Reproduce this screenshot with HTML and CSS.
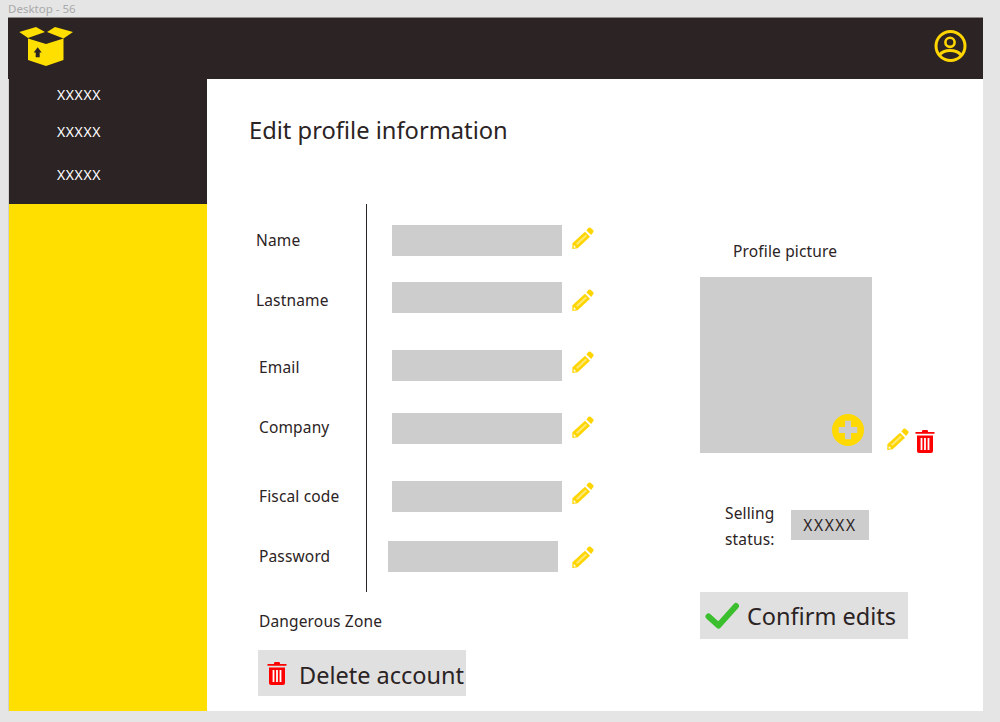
FILE: index.html
```html
<!DOCTYPE html>
<html lang="en">
<head>
<meta charset="utf-8">
<title>Edit profile information</title>
<link rel="stylesheet" href="styles.css">
</head>
<body>
<svg class="sprites" width="0" height="0" aria-hidden="true">
  <symbol id="pencil" viewBox="0 0 22 23">
    <path fill="#ffd500" d="M0.3 22 L0.4 16.3 L13 4.7 L18 9.7 L5.7 21.3 Z"/>
    <path fill="#ffe873" d="M4 16.6 L13.6 7.5 L15 8.9 L5.4 18 Z"/>
    <path fill="#fff" d="M1.6 20.8 L1.8 18 L4.2 20.2 Z"/>
    <path fill="#ffd500" d="M14.4 3.4 L16.2 1 Q17.4 -0.1 18.6 0.8 L21.3 3.2 Q22 4.4 21 5.6 L19.2 8 Z"/>
  </symbol>
  <symbol id="trash" viewBox="0 0 20 23">
    <path fill="#f00" d="M7 1.2 Q7 0 8.2 0 H11.8 Q13 0 13 1.2 V2 H19.5 V3.8 H0.5 V2 H7 Z"/>
    <path fill="#f00" d="M2 5.5 H18 V21 Q18 23 16 23 H4 Q2 23 2 21 Z"/>
    <path fill="#fff" d="M5.6 8 H7.4 V20 H5.6 Z M9.1 8 H10.9 V20 H9.1 Z M12.6 8 H14.4 V20 H12.6 Z"/>
  </symbol>
</svg>

<div class="caption">Desktop - 56</div>
<div class="frame">
  <header class="topbar">
    <svg class="logo" width="55" height="41" viewBox="0 0 55 41">
      <path fill="#ffdf00" d="M0.3 6 L17 1 L26 6 L9 12 Z M28 6 L36 1 L54 6 L44.5 12.5 Z"/>
      <path fill="#ffdf00" d="M9 12.5 L27 18 L44.5 12.5 V34 L27 40 L9 34 Z"/>
      <path fill="#2b2324" d="M16.7 31.3 V26.5 H14.7 L18.7 21.3 L22.7 26.5 H20.7 V31.3 Z"/>
    </svg>
    <svg class="avatar" width="34" height="34" viewBox="0 0 34 34">
      <circle cx="17.5" cy="17" r="14.5" fill="none" stroke="#ffd500" stroke-width="3"/>
      <circle cx="17" cy="13.3" r="4.6" fill="none" stroke="#ffd500" stroke-width="2.6"/>
      <path fill="none" stroke="#ffd500" stroke-width="3" d="M6.5 26 Q10 21.5 17 21.5 Q24.5 21.5 28 26"/>
    </svg>
  </header>
  <div class="shell">
    <aside class="sidebar">
      <nav class="menu">
        <a class="menu-item item-1">XXXXX</a>
        <a class="menu-item item-2">XXXXX</a>
        <a class="menu-item item-3">XXXXX</a>
      </nav>
    </aside>
    <main class="content">
      <h1 class="title">Edit profile information</h1>
      <div class="columns">
        <section class="left">
          <div class="form">
            <div class="row r1"><span class="label">Name</span><div class="fields"><span class="input"></span><svg class="pencil"><use href="#pencil"/></svg></div></div>
            <div class="row r2"><span class="label">Lastname</span><div class="fields"><span class="input"></span><svg class="pencil"><use href="#pencil"/></svg></div></div>
            <div class="row r3"><span class="label">Email</span><div class="fields"><span class="input"></span><svg class="pencil"><use href="#pencil"/></svg></div></div>
            <div class="row r4"><span class="label">Company</span><div class="fields"><span class="input"></span><svg class="pencil"><use href="#pencil"/></svg></div></div>
            <div class="row r5"><span class="label">Fiscal code</span><div class="fields"><span class="input"></span><svg class="pencil"><use href="#pencil"/></svg></div></div>
            <div class="row r6"><span class="label">Password</span><div class="fields"><span class="input"></span><svg class="pencil"><use href="#pencil"/></svg></div></div>
          </div>
          <p class="danger-title">Dangerous Zone</p>
          <button class="action delete"><svg class="trash-big"><use href="#trash"/></svg><span>Delete account</span></button>
        </section>
        <section class="right">
          <p class="picture-title">Profile picture</p>
          <div class="picture-row">
            <div class="picture">
              <svg class="add" width="32" height="32" viewBox="0 0 32 32">
                <circle cx="16" cy="16" r="16" fill="#ffd900"/>
                <path fill="#cdcdcd" d="M13 6.7 H19 V13 H25.3 V19 H19 V25.3 H13 V19 H6.7 V13 H13 Z"/>
              </svg>
            </div>
            <svg class="pencil-pic"><use href="#pencil"/></svg>
            <svg class="trash-pic"><use href="#trash"/></svg>
          </div>
          <div class="status">
            <span class="status-label">Selling<br>status:</span>
            <span class="chip">XXXXX</span>
          </div>
          <button class="action confirm">
            <svg class="check" width="34" height="28" viewBox="0 0 34 28"><path fill="none" stroke="#3cbf2e" stroke-width="6" stroke-linecap="round" stroke-linejoin="round" d="M3.5 14.5 L13.5 23.5 L31 4"/></svg>
            <span>Confirm edits</span>
          </button>
        </section>
      </div>
    </main>
  </div>
</div>
</body>
</html>
```
FILE: styles.css
```css
* { box-sizing: border-box; }

html, body {
  margin: 0;
  height: 722px;
  overflow: hidden;
}

body {
  background: #e5e5e5;
  color: #2b2324;
  font-family: "Noto Sans", "Liberation Sans", sans-serif;
  padding: 0 17px 0 8px;
}

.sprites { position: absolute; }

.caption {
  height: 17px;
  padding-top: 2px;
  font-size: 11.5px;
  line-height: 13px;
  color: #a9a9a9;
}

.frame {
  width: 975px;
  height: 694px;
  display: flex;
  flex-direction: column;
}

.topbar {
  height: 62px;
  flex: none;
  background: #2b2324;
  border-top: 1px solid #8f8b8b;
  display: flex;
  align-items: flex-start;
  justify-content: space-between;
  padding: 8px 16px 0 11px;
}

.logo { display: block; }
.avatar { display: block; margin-top: 3px; }

.shell {
  flex: 1;
  display: flex;
  min-height: 0;
}

.sidebar {
  width: 199px;
  flex: none;
  background: #ffdf00;
  border-left: 1px solid #d0d0d0;
}

.menu {
  height: 125px;
  background: #2b2324;
  display: flex;
  flex-direction: column;
  padding: 7px 0 0 48px;
}

.menu-item {
  color: #fff;
  font-size: 14px;
  line-height: 18px;
  letter-spacing: 0.6px;
}
.item-2 { margin-top: 19px; }
.item-3 { margin-top: 25px; }

.content {
  flex: 1;
  background: #fff;
  padding: 0 0 0 42px;
}

.title {
  height: 125px;
  margin: 0;
  padding-top: 34px;
  font-size: 23.7px;
  line-height: 34px;
  font-weight: 400;
}

.columns { display: flex; }
.left { width: 451px; flex: none; }
.right { flex: 1; }

.form { display: flex; flex-direction: column; }

.row {
  display: flex;
  height: 64px;
  align-items: flex-start;
  font-size: 15.5px;
  letter-spacing: 0.15px;
}
.r5, .r6 { height: 66px; }

.label {
  width: 117px;
  flex: none;
  line-height: 20px;
  margin-top: var(--label-top);
  padding-left: var(--label-left, 10px);
}

.fields {
  align-self: stretch;
  flex: 1;
  display: flex;
  align-items: flex-start;
  border-left: 1px solid #2b2324;
  padding-left: var(--input-left, 25px);
}

.input {
  width: 170px;
  height: 31px;
  flex: none;
  background: #cdcdcd;
  margin-top: var(--input-top);
}

.pencil {
  width: 22px;
  height: 23px;
  flex: none;
  margin-top: var(--pencil-top);
  margin-left: var(--pencil-left, 10px);
}

.r1 { --label-top: 26px; --label-left: 7px; --input-top: 21px; --pencil-top: 23px; }
.r2 { --label-top: 22px; --label-left: 7px; --input-top: 14px; --pencil-top: 21px; }
.r3 { --label-top: 25px; --input-top: 18px; --pencil-top: 19px; }
.r4 { --label-top: 21px; --input-top: 17px; --pencil-top: 20px; }
.r5 { --label-top: 26px; --input-top: 21px; --pencil-top: 22px; }
.r6 { --label-top: 20px; --input-left: 21px; --input-top: 15px; --pencil-top: 20px; --pencil-left: 14px; }

.danger-title {
  margin: 19px 0 0 10px;
  font-size: 15.5px;
  line-height: 20px;
  letter-spacing: 0.15px;
}

.action {
  display: flex;
  align-items: center;
  width: 208px;
  border: 0;
  padding: 0;
  background: #e0e0e0;
  color: #2b2324;
  font-family: inherit;
  font-size: 23.5px;
  white-space: nowrap;
}

.delete {
  height: 46px;
  margin: 19px 0 0 9px;
  padding: 4px 0 0 9px;
  gap: 12px;
}

.trash-big { width: 20px; height: 23px; flex: none; margin-top: -4px; }

.picture-title {
  margin: 37px 0 0 33px;
  font-size: 15.5px;
  line-height: 20px;
  letter-spacing: 0.15px;
}

.picture-row {
  display: flex;
  align-items: flex-end;
  margin-top: 16px;
}

.picture {
  position: relative;
  width: 172px;
  height: 176px;
  background: #cdcdcd;
}

.add {
  position: absolute;
  right: 8px;
  bottom: 7px;
}

.pencil-pic { width: 22px; height: 23px; margin: 0 6px 2px 15px; }
.trash-pic { width: 20px; height: 23px; }

.status {
  display: flex;
  align-items: center;
  margin: 47px 0 0 25px;
  font-size: 15.5px;
  letter-spacing: 0.15px;
}

.status-label { width: 66px; line-height: 26px; }

.chip {
  width: 78px;
  height: 30px;
  margin-bottom: 2px;
  background: #cdcdcd;
  text-align: center;
  line-height: 30px;
  letter-spacing: 1.6px;
}

.confirm {
  height: 47px;
  margin-top: 40px;
  padding-left: 5px;
  gap: 8px;
}
```
